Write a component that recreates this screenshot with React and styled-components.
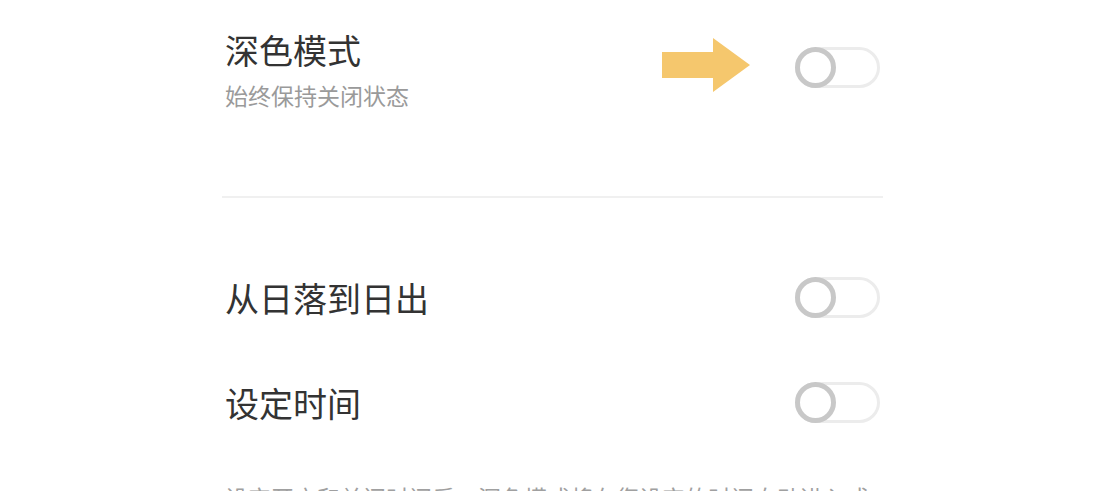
import React from "react";
import styled, { createGlobalStyle } from "styled-components";

const Global = createGlobalStyle`
  html, body { margin: 0; padding: 0; background: #ffffff; }
  body { font-family: "Noto Sans CJK SC", "Noto Sans", sans-serif; overflow: hidden; }
`;

const Page = styled.div`
  width: 1093px;
  height: 491px;
  overflow: hidden;
  background: #ffffff;
`;

const Column = styled.div`
  margin-left: 222px;
  width: 661px;
  display: flex;
  flex-direction: column;
`;

const TopSection = styled.div`
  display: flex;
  justify-content: space-between;
  align-items: flex-start;
  padding: 30px 3px 0 3px;
  height: 196px;
  box-sizing: border-box;
`;

const TextBlock = styled.div`
  display: flex;
  flex-direction: column;
`;

const Title = styled.div`
  font-size: 34px;
  line-height: 40px;
  color: #333333;
`;

const Subtitle = styled.div`
  font-size: 23px;
  line-height: 28px;
  margin-top: 11px;
  color: #9a9a9a;
`;

const RightGroup = styled.div`
  display: flex;
  align-items: flex-start;
  gap: 45px;
  margin-top: 8px;
`;

const Divider = styled.div`
  height: 2px;
  background: #f0f0f0;
`;

const Rows = styled.div`
  padding-top: 47px;
  display: flex;
  flex-direction: column;
`;

const Row = styled.div`
  height: 105px;
  display: flex;
  align-items: center;
  justify-content: space-between;
  padding: 0 3px;
`;

const Note = styled.div`
  margin-top: 27px;
  padding: 0 3px;
  font-size: 23px;
  line-height: 30px;
  color: #a0a0a0;
`;

const Track = styled.div`
  position: relative;
  width: 85px;
  height: 41px;
  margin-top: ${(p) => p.$offset || 0}px;
  box-sizing: border-box;
  border: 3px solid #ececec;
  border-radius: 21px;
  background: #ffffff;
  flex-shrink: 0;
`;

const Knob = styled.div`
  position: absolute;
  left: -3px;
  top: -3px;
  width: 41px;
  height: 41px;
  box-sizing: border-box;
  border: 5px solid #c8c8c8;
  border-radius: 50%;
  background: #ffffff;
`;

const Toggle = ({ offset }) => (
  <Track $offset={offset}>
    <Knob />
  </Track>
);

const Arrow = () => (
  <svg width="88" height="54" viewBox="0 0 88 54">
    <polygon points="0,14 51,14 51,0 88,27 51,54 51,40 0,40" fill="#f5c76d" />
  </svg>
);

export default function App() {
  return (
    <Page>
      <Global />
      <Column>
        <TopSection>
          <TextBlock>
            <Title>深色模式</Title>
            <Subtitle>始终保持关闭状态</Subtitle>
          </TextBlock>
          <RightGroup>
            <Arrow />
            <Toggle offset={9} />
          </RightGroup>
        </TopSection>
        <Divider />
        <Rows>
          <Row>
            <Title>从日落到日出</Title>
            <Toggle />
          </Row>
          <Row>
            <Title>设定时间</Title>
            <Toggle />
          </Row>
        </Rows>
        <Note>设定开启和关闭时间后，深色模式将在您设定的时间自动进入或退出。</Note>
      </Column>
    </Page>
  );
}
